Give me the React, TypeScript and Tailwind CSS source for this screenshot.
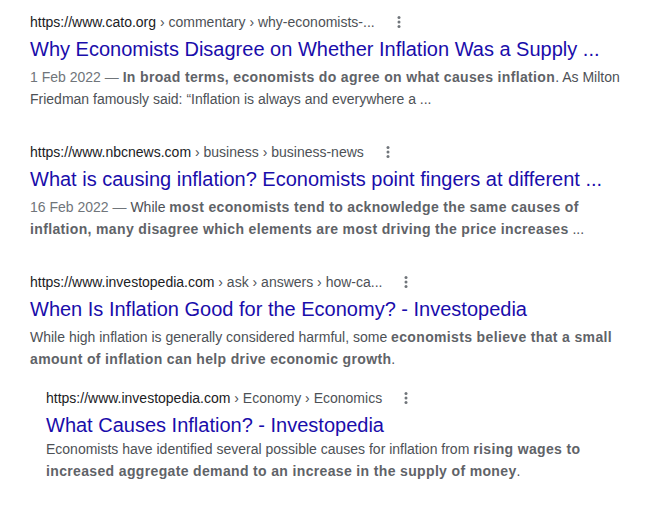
import React from 'react';

type Part = { t: string; b?: boolean };

type Result = {
  domain: string;
  crumbs: string[];
  title: string;
  date?: string;
  snippet: Part[];
};

const results: Result[] = [
  {
    domain: 'https://www.cato.org',
    crumbs: ['commentary', 'why-economists-...'],
    title: 'Why Economists Disagree on Whether Inflation Was a Supply ...',
    date: '1 Feb 2022',
    snippet: [
      { t: 'In broad terms, economists do agree on what causes inflation', b: true },
      { t: '. As Milton Friedman famously said: \u201cInflation is always and everywhere a ...' },
    ],
  },
  {
    domain: 'https://www.nbcnews.com',
    crumbs: ['business', 'business-news'],
    title: 'What is causing inflation? Economists point fingers at different ...',
    date: '16 Feb 2022',
    snippet: [
      { t: 'While ' },
      { t: 'most economists tend to acknowledge the same causes of inflation, many disagree which elements are most driving the price increases', b: true },
      { t: ' ...' },
    ],
  },
  {
    domain: 'https://www.investopedia.com',
    crumbs: ['ask', 'answers', 'how-ca...'],
    title: 'When Is Inflation Good for the Economy? - Investopedia',
    snippet: [
      { t: 'While high inflation is generally considered harmful, some ' },
      { t: 'economists believe that a small amount of inflation can help drive economic growth', b: true },
      { t: '.' },
    ],
  },
];

const nested: Result = {
  domain: 'https://www.investopedia.com',
  crumbs: ['Economy', 'Economics'],
  title: 'What Causes Inflation? - Investopedia',
  snippet: [
    { t: 'Economists have identified several possible causes for inflation from ' },
    { t: 'rising wages to increased aggregate demand to an increase in the supply of money', b: true },
    { t: '.' },
  ],
};

function MoreIcon() {
  return (
    <span className="ml-[12px] flex h-[18px] w-[24px] items-center justify-center">
      <svg width="18" height="18" viewBox="0 0 24 24" fill="#70757a">
        <circle cx="12" cy="6" r="2" />
        <circle cx="12" cy="12" r="2" />
        <circle cx="12" cy="18" r="2" />
      </svg>
    </span>
  );
}

function SearchResult({ r, tight }: { r: Result; tight?: boolean }) {
  return (
    <div className="w-[600px]">
      {/* url + breadcrumbs */}
      <div className="flex h-[18px] items-center text-[14px] leading-[18px]">
        <span className="text-[#202124]">{r.domain}</span>
        <span className="whitespace-pre text-[#4d5156]">
          {r.crumbs.map((c) => ` \u203a ${c}`).join('')}
        </span>
        <MoreIcon />
      </div>

      <div className="mt-[5px] whitespace-nowrap text-[20px] leading-[26px] text-[#1a0dab]">
        {r.title}
      </div>

      <div className={`${tight ? 'mt-0' : 'mt-[4px]'} text-[14px] leading-[22px] text-[#4d5156]`}>
        {r.date && <span className="text-[#70757a]">{r.date} &mdash; </span>}
        {r.snippet.map((p, i) =>
          p.b ? (
            <b key={i} className="font-bold tracking-[0.35px] text-[#5f6368]">
              {p.t}
            </b>
          ) : (
            <span key={i}>{p.t}</span>
          )
        )}
      </div>
    </div>
  );
}

export default function App() {
  return (
    <div
      className="min-h-screen w-[657px] bg-white pl-[30px] pt-[13px]"
      style={{ fontFamily: '"Liberation Sans", Arial, sans-serif' }}
    >
      <div className="flex flex-col gap-[33px]">
        {results.map((r) => (
          <SearchResult key={r.title} r={r} />
        ))}
      </div>

      {/* indented sub-result */}
      <div className="mt-[19px] pl-[16px]">
        <SearchResult r={nested} tight />
      </div>
    </div>
  );
}
